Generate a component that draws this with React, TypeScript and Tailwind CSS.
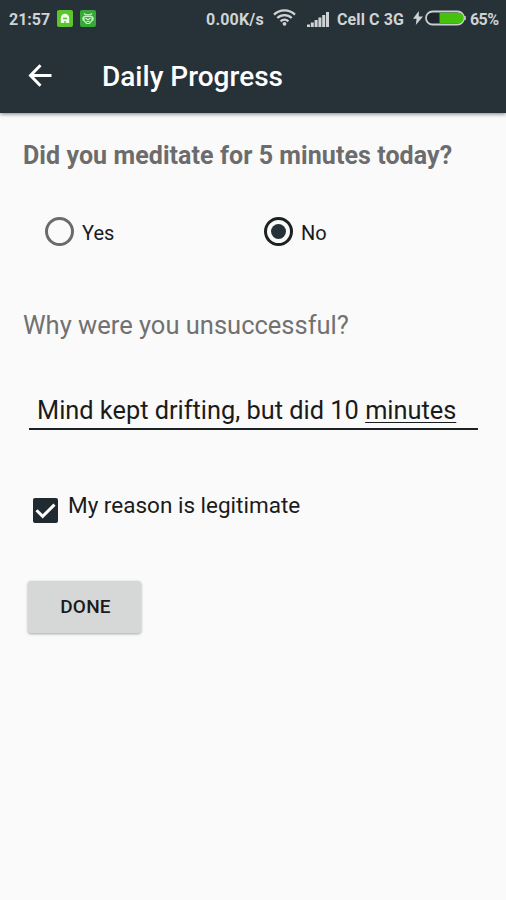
import { useState } from 'react'
import clsx from 'clsx'

function StatusBar() {
  return (
    <div className="flex h-[38px] items-center text-[16px] font-bold leading-none text-[#cfd3d5]">
      <span className="ml-[9px] w-[48px] whitespace-nowrap pt-px">21:57</span>
      <svg className="-mt-0.5" width="16" height="17" viewBox="0 0 16 17" aria-hidden="true">
        <rect width="16" height="17" rx="2" fill="#5ec42d" />
        <path d="M3.8 13V8a4.2 4.2 0 0 1 8.4 0v5z" fill="#effbe9" />
        <path d="M6 8.5h4M7 12h2" stroke="#5ec42d" strokeWidth="1.5" />
      </svg>
      <svg className="-mt-0.5 ml-[7px]" width="16" height="17" viewBox="0 0 16 17" aria-hidden="true">
        <rect width="16" height="17" rx="2" fill="#38a838" />
        <path
          d="M4 3.5l1.5 1.3h5L12 3.5M4 6.5v4l2.5 3h3l2.5-3v-4zM3 7v3.5M13 7v3.5M5.5 8l2.5 1.8L10.5 8M6.5 11.5h3"
          fill="none"
          stroke="#c9f0c6"
          strokeWidth="1.2"
        />
      </svg>

      <span className="ml-auto w-[59px] whitespace-nowrap pt-px tracking-[0.2px]">0.00K/s</span>
      <svg className="-mt-1 ml-2" width="23" height="17" viewBox="0 0 23 17" fill="none" stroke="currentColor" aria-hidden="true">
        <path d="M1 5.6a15 15 0 0 1 21 0M4.3 9a10.4 10.4 0 0 1 14.4 0M7.6 12.3a5.7 5.7 0 0 1 7.8 0" strokeWidth="2.3" />
        <circle cx="11.5" cy="14.8" r="1.9" fill="currentColor" stroke="none" />
      </svg>
      <svg className="ml-[11px]" width="23" height="17" viewBox="0 0 23 17" fill="currentColor" aria-hidden="true">
        <path d="M0 13.5h3v2.5H0zM3.8 11.5h3v4.5h-3zM7.6 9h3v7h-3zM11.4 6.5h3v9.5h-3zM15.2 4h3v12h-3zM19 1h3v15h-3z" />
      </svg>
      <span className="ml-[7px] w-[68px] whitespace-nowrap pt-px tracking-[0.1px]">Cell C 3G</span>
      <svg className="-mt-0.5 ml-2" width="10" height="14" viewBox="0 0 10 14" fill="currentColor" aria-hidden="true">
        <path d="M5.8 0L0 7.8h3.6L2.8 14 10 5.6H5.8z" />
      </svg>
      <svg className="-mt-0.5 ml-0.5" width="41" height="16" viewBox="0 0 41 16" aria-hidden="true">
        <rect x="1" y="1.5" width="38" height="13" rx="6.5" fill="#1c262b" stroke="#c9ced0" strokeWidth="1.8" />
        <path d="M14.5 2.8h19a5.2 5.2 0 0 1 0 10.4h-19z" fill="#45c20b" />
        <path d="M40 6v4" stroke="#c9ced0" strokeWidth="1.6" />
      </svg>
      <span className="ml-1 mr-2 w-[28px] whitespace-nowrap pt-px tracking-[-0.6px]">65%</span>
    </div>
  )
}

interface RadioOptionProps {
  label: string
  checked: boolean
  onSelect: () => void
}

function RadioOption({ label, checked, onSelect }: RadioOptionProps) {
  return (
    <button type="button" role="radio" aria-checked={checked} onClick={onSelect} className="flex w-[219px] items-center">
      <span
        className={clsx(
          'flex size-[29px] items-center justify-center rounded-full border-[3px]',
          checked ? 'border-[#1c2123]' : 'border-[#6b6b6b]'
        )}
      >
        {checked && <span className="size-[15px] rounded-full bg-[#263238]" />}
      </span>
      <span className="ml-2 pt-[3px] text-[20px] leading-7 text-[#1b1b1b]">{label}</span>
    </button>
  )
}

export default function App() {
  const [meditated, setMeditated] = useState(false)
  const [legitimate, setLegitimate] = useState(true)

  return (
    <div className="flex h-[900px] w-[506px] flex-col overflow-hidden bg-[#fafafa] font-[Roboto,sans-serif]">
      <header className="h-[113px] shrink-0 bg-[#263238] shadow-[0_1px_4px_rgba(0,0,0,0.5)]">
        <StatusBar />
        <div className="flex h-[75px] items-center">
          <button type="button" aria-label="Back" className="ml-7 text-white">
            <svg width="24" height="24" viewBox="0 0 24 24" fill="none" stroke="currentColor" strokeWidth="3" aria-hidden="true">
              <path d="M23.5 11.5H3M12.5 1.3L2.5 11.5l10 10.2" />
            </svg>
          </button>
          <h1 className="ml-[50px] pt-0.5 text-[28px] font-medium leading-8 text-white">Daily Progress</h1>
        </div>
      </header>

      <main className="flex flex-col items-start">
        <h2 className="ml-[23px] mt-[27px] whitespace-nowrap text-[25px] font-bold leading-8 tracking-[0.07px] text-[#6c6c6c]">
          Did you meditate for 5 minutes today?
        </h2>

        <div role="radiogroup" className="ml-[45px] mt-11 flex">
          <RadioOption label="Yes" checked={meditated} onSelect={() => setMeditated(true)} />
          <RadioOption label="No" checked={!meditated} onSelect={() => setMeditated(false)} />
        </div>

        <p className="ml-[23px] mt-[62px] whitespace-nowrap text-[25.5px] leading-8 text-[#717171]">
          Why were you unsuccessful?
        </p>

        <div className="ml-[29px] mt-[53px] h-[36px] w-[449px] whitespace-nowrap border-b-2 border-[#1c2123] pl-2 text-[25.35px] leading-8 text-[#1b1b1b]">
          Mind kept drifting, but did 10{' '}
          <span className="underline decoration-1 underline-offset-[3px]">minutes</span>
        </div>

        <button
          type="button"
          role="checkbox"
          aria-checked={legitimate}
          onClick={() => setLegitimate(!legitimate)}
          className="ml-[33px] mt-[58px] flex items-start"
        >
          <span
            className={clsx(
              'mt-[10px] flex size-[25px] items-center justify-center rounded-[2px]',
              legitimate ? 'bg-[#1f2b31]' : 'border-2 border-[#6b6b6b]'
            )}
          >
            {legitimate && (
              <svg width="21" height="17" viewBox="0 0 21 17" fill="none" stroke="white" strokeWidth="3" aria-hidden="true">
                <path d="M1.5 8.2l6.2 6.2L19.5 2.6" />
              </svg>
            )}
          </span>
          <span className="ml-[10px] pt-px text-[22.5px] leading-8 text-[#1b1b1b]">My reason is legitimate</span>
        </button>

        <button
          type="button"
          className="ml-7 mt-[58px] h-[52px] w-[113px] rounded-[3px] bg-[#d6d7d7] pl-0.5 text-[19px] font-medium tracking-[0.2px] text-[#1b1b1b] shadow-[0_1px_3px_rgba(0,0,0,0.35)]"
        >
          DONE
        </button>
      </main>
    </div>
  )
}
